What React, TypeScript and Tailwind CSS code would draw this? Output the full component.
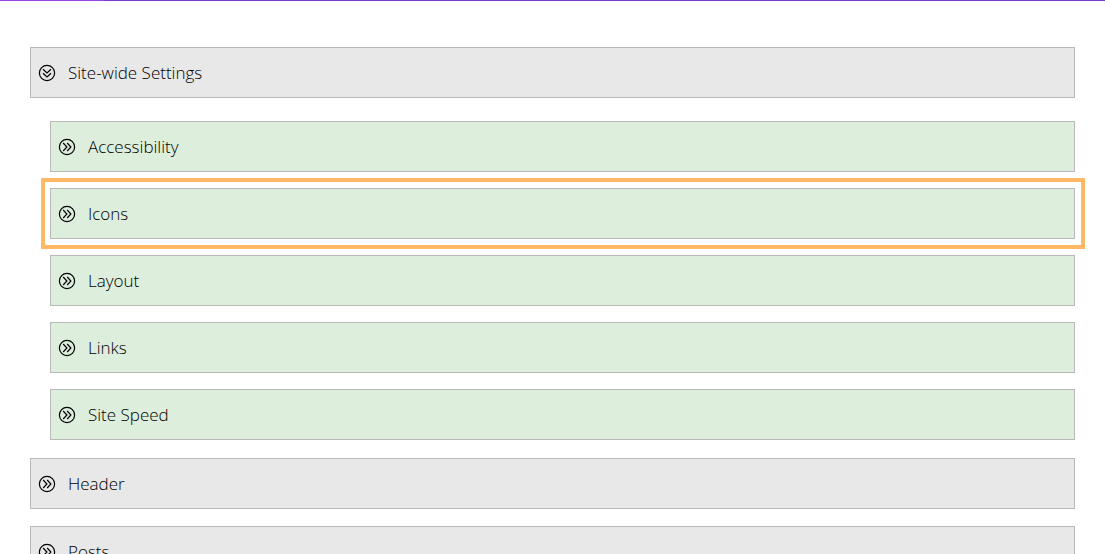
import { useState } from "react";
import clsx from "clsx";

type Section = {
  title: string;
  children?: string[];
};

const SECTIONS: Section[] = [
  {
    title: "Site-wide Settings",
    children: ["Accessibility", "Icons", "Layout", "Links", "Site Speed"],
  },
  { title: "Header" },
  { title: "Posts" },
];

// Sub-section framed in orange
const HIGHLIGHTED = "Icons";

/** Circled double chevron: points right when closed, down when open. */
function ToggleIcon({ open }: { open: boolean }) {
  return (
    <svg
      viewBox="0 0 18 18"
      className={clsx("size-[18px] shrink-0", open && "rotate-90")}
      fill="none"
      stroke="currentColor"
      aria-hidden="true"
    >
      <circle cx="9" cy="9" r="7.6" strokeWidth="1.2" />
      <path d="M5.2 5 8.9 9l-3.7 4M9.2 5l3.7 4-3.7 4" strokeWidth="1.2" />
    </svg>
  );
}

type AccordionButtonProps = {
  title: string;
  open?: boolean;
  nested?: boolean;
  highlighted?: boolean;
  onClick?: () => void;
};

function AccordionButton({ title, open = false, nested = false, highlighted = false, onClick }: AccordionButtonProps) {
  return (
    <button
      type="button"
      onClick={onClick}
      aria-expanded={open}
      className={clsx(
        "relative flex w-full items-center gap-3 border border-[#b9b9b9] px-[7px] py-3 text-left text-[17px] leading-[25px] font-light text-black",
        nested ? "bg-[#ddeedd]" : "bg-[#e8e8e8]",
      )}
    >
      <ToggleIcon open={open} />
      {title}
      {highlighted && (
        <span className="pointer-events-none absolute -top-[11px] -right-[11px] -bottom-[11px] -left-[10px] border-4 border-[#ffb866]" />
      )}
    </button>
  );
}

export default function App() {
  const [openTitle, setOpenTitle] = useState<string | null>("Site-wide Settings");
  const [openChild, setOpenChild] = useState<string | null>(null);

  return (
    <div className="h-screen overflow-hidden bg-white font-['Open_Sans','Noto_Sans',sans-serif]">
      <div className="flex h-px bg-[#7e3bd0]">
        <div className="w-26 bg-[#9747ee]" />
      </div>

      <main className="flex flex-col gap-[17px] px-[30px] pt-[46px]">
        {SECTIONS.map((section) => {
          const open = section.title === openTitle;
          return (
            <section key={section.title}>
              <AccordionButton
                title={section.title}
                open={open}
                onClick={() => setOpenTitle(open ? null : section.title)}
              />
              {open && section.children && (
                <div className="flex flex-col gap-4 pt-[23px] pb-px pl-5">
                  {section.children.map((child) => (
                    <AccordionButton
                      key={child}
                      title={child}
                      nested
                      open={child === openChild}
                      highlighted={child === HIGHLIGHTED}
                      onClick={() => setOpenChild(child === openChild ? null : child)}
                    />
                  ))}
                </div>
              )}
            </section>
          );
        })}
      </main>
    </div>
  );
}
